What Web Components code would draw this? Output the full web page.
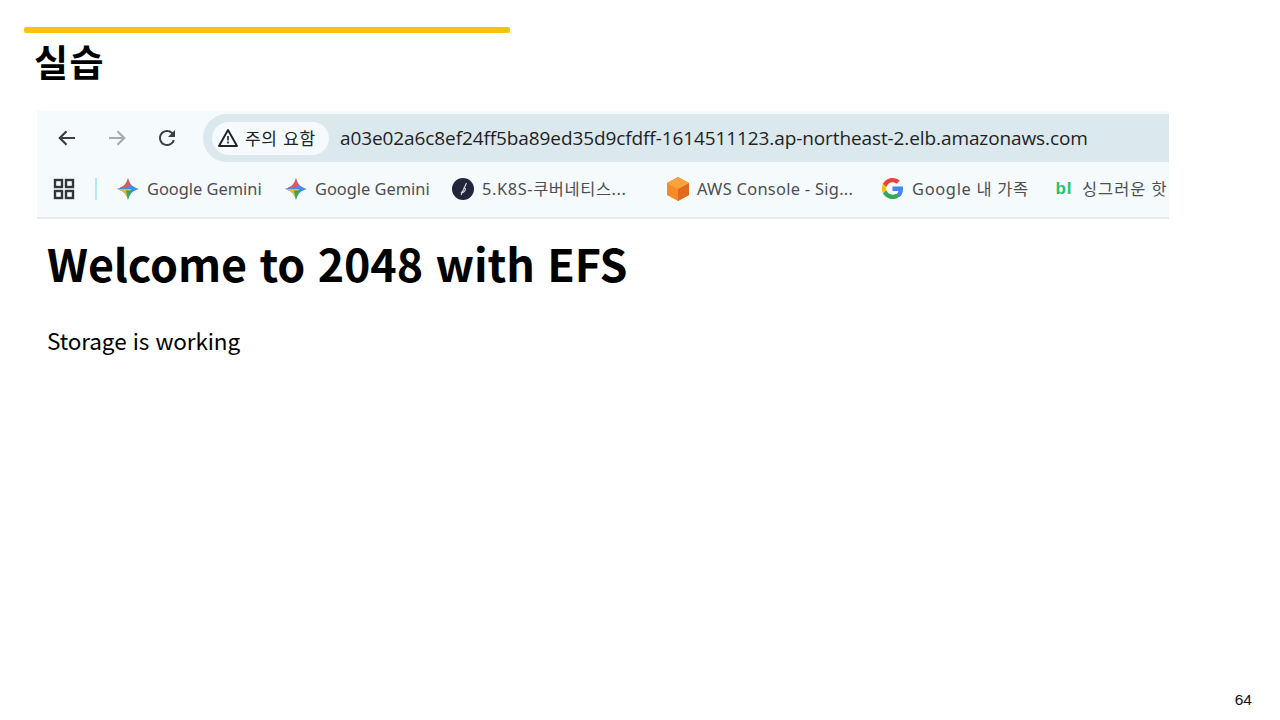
<!DOCTYPE html>
<html lang="ko">
<head>
<meta charset="utf-8">
<title>실습</title>
<style>
  html, body { margin: 0; padding: 0; background: #fff; }
  body { width: 1280px; height: 720px; overflow: hidden; font-family: "Noto Sans CJK KR", "Noto Sans", sans-serif; }
</style>
</head>
<body>
<lab-slide heading="실습" page="64">
  <browser-shot url="a03e02a6c8ef24ff5ba89ed35d9cfdff-1614511123.ap-northeast-2.elb.amazonaws.com">
    <bookmark-item label="Google Gemini" icon="gemini" width="168"></bookmark-item>
    <bookmark-item label="Google Gemini" icon="gemini" width="167"></bookmark-item>
    <bookmark-item label="5.K8S-쿠버네티스..." icon="notion" width="215" track="0.6"></bookmark-item>
    <bookmark-item label="AWS Console - Sig..." icon="aws" width="214" track="0.3"></bookmark-item>
    <bookmark-item label="Google 내 가족" icon="google" width="173" track="0.7"></bookmark-item>
    <bookmark-item label="싱그러운 핫" icon="bl" width="130" track="1"></bookmark-item>
    <web-page slot="page" title-text="Welcome to 2048 with EFS" body-text="Storage is working"></web-page>
  </browser-shot>
</lab-slide>

<script>
// slide frame: yellow rule, heading, content, page number
class LabSlide extends HTMLElement {
  constructor() {
    super();
    this.attachShadow({ mode: 'open' });
    this.shadowRoot.innerHTML = `
      <style>
        :host { display: block; position: relative; width: 1280px; height: 720px; box-sizing: border-box; padding: 27px 0 0 24px; color: #000; }
        .rule { width: 486px; height: 6px; border-radius: 2px; background: #fdc30a; }
        h1 { margin: 6px 0 0 10px; height: 44px; font: 700 37px/44px "Noto Sans CJK KR", sans-serif; letter-spacing: 1.5px; }
        .content { margin: 28px 0 0 13px; }
        .page { position: absolute; right: 28px; bottom: 12px; font: 15.5px/16px "Liberation Sans", sans-serif; color: #111; }
      </style>
      <div class="rule"></div>
      <h1></h1>
      <div class="content"><slot></slot></div>
      <div class="page"></div>
    `;
    this.shadowRoot.querySelector('h1').textContent = this.getAttribute('heading');
    this.shadowRoot.querySelector('.page').textContent = this.getAttribute('page');
  }
}

// cropped chrome window
class BrowserShot extends HTMLElement {
  constructor() {
    super();
    this.attachShadow({ mode: 'open' });
    this.shadowRoot.innerHTML = `
      <style>
        :host { display: block; width: 1132px; }
        .chrome { background: #f5fafc; border-bottom: 2px solid #e6eced; height: 106px; overflow: hidden; }
        .top { display: flex; align-items: center; height: 54px; padding-left: 18px; }
        .nav { width: 24px; height: 24px; margin-right: 26px; flex: none; }
        .nav:nth-of-type(3) { margin-right: 24px; }
        .omni { flex: 1; display: flex; align-items: center; height: 48px; padding-left: 9px; background: #dbe8ed; border-radius: 24px 0 0 24px; }
        .chip { display: flex; align-items: center; gap: 6px; width: 117px; height: 33px; box-sizing: border-box; padding-left: 5px; border-radius: 17px; background: #f5fafc; font: 17px/33px "Noto Sans CJK KR", sans-serif; letter-spacing: 0.7px; color: #222; white-space: nowrap; flex: none; }
        .chip span { position: relative; top: -1px; }
        .url { margin-left: 11px; font: 19px/24px "Open Sans", sans-serif; color: #1f1f1f; white-space: nowrap; letter-spacing: -0.1px; }
        .marks { display: flex; align-items: center; height: 47px; padding-left: 16px; }
        .apps { width: 22px; height: 22px; flex: none; }
        .sep { width: 2px; height: 22px; margin: 0 20px 0 20px; background: #b5e6f5; flex: none; }
      </style>
      <div class="chrome">
        <div class="top">
          <svg class="nav" viewBox="0 0 24 24" fill="none" stroke="#3c4043" stroke-width="2.2"><path d="M20 12H5M11.5 5.2 4.8 12l6.700 6.800"/></svg>
          <svg class="nav" viewBox="0 0 24 24" fill="none" stroke="#a6abae" stroke-width="2.2"><path d="M4 12h15M12.500 5.200l6.700 6.800-6.700 6.800"/></svg>
          <svg class="nav" viewBox="0 0 24 24" fill="#3c4043"><path d="M17.650 6.350A7.958 7.958 0 0 0 12 4c-4.420 0-7.990 3.580-7.990 8s3.570 8 7.990 8c3.730 0 6.840-2.550 7.730-6h-2.080A5.990 5.990 0 0 1 12 18c-3.310 0-6-2.690-6-6s2.690-6 6-6c1.660 0 3.140.690 4.220 1.780L13 11h7V4l-2.350 2.350z"/></svg>
          <div class="omni">
            <div class="chip">
              <svg width="22" height="22" viewBox="0 0 22 22" fill="none" stroke="#222" stroke-width="1.9"><path d="M11 3 20 19H2Z" stroke-linejoin="round"/><path d="M11 9v4.500M11 14.500v2" stroke-width="1.600"/></svg>
              <span>주의 요함</span>
            </div>
            <span class="url"></span>
          </div>
        </div>
        <div class="marks">
          <svg class="apps" viewBox="0 0 22 22" fill="none" stroke="#33373a" stroke-width="2.4"><rect x="2" y="2" width="7" height="7"/><rect x="13" y="2" width="7" height="7"/><rect x="2" y="13" width="7" height="7"/><rect x="13" y="13" width="7" height="7"/></svg>
          <div class="sep"></div>
          <slot></slot>
        </div>
      </div>
      <slot name="page"></slot>
    `;
    this.shadowRoot.querySelector('.url').textContent = this.getAttribute('url');
  }
}

const BOOKMARK_ICONS = {
  gemini: `<svg width="22" height="22" viewBox="0 0 22 22"><defs><clipPath id="s"><path d="M11 0c1.200 5.500 4.500 9.200 11 11-6.500 1.800-9.800 5.500-11 11-1.200-5.500-4.500-9.200-11-11 6.500-1.800 9.800-5.500 11-11Z"/></clipPath></defs><g clip-path="url(#s)"><rect width="22" height="22" fill="#3f8cf2"/><path d="M0 11 11 0l3 8Z" fill="#e8594a"/><path d="M0 11h14l-3 11Z" fill="#f2b632"/><path d="M9 12.500h5.500L11 22Z" fill="#35a85a"/></g></svg>`,
  notion: `<svg width="22" height="22" viewBox="0 0 22 22"><circle cx="11" cy="11" r="11" fill="#23263a"/><path d="M14.500 5 9 17M11.500 10c1.500-.5 2.500.5 1.500 2.500s-3 2.500-4 1.500" fill="none" stroke="#d9dbe2" stroke-width="1.100"/></svg>`,
  aws: `<svg width="22" height="24" viewBox="0 0 22 24"><path d="M11 0 22 6v12l-11 6L0 18V6Z" fill="#f58a26"/><path d="M11 12 22 6v12l-11 6Z" fill="#e36a1c"/><path d="M11 0 22 6l-11 6L0 6Z" fill="#f9a23e"/></svg>`,
  google: `<svg width="23" height="23" viewBox="0 0 48 48"><path fill="#4285f4" d="M46 24.500c0-1.600-.1-3.100-.4-4.500H24v9h12.400c-.5 2.900-2.200 5.300-4.600 6.900l7.200 5.600C43.300 38.500 46 32.100 46 24.500Z"/><path fill="#34a853" d="M24 46c6 0 11-2 14.900-5.400l-7.200-5.600c-2 1.400-4.600 2.200-7.700 2.200-5.900 0-10.800-4-12.600-9.300L4 33.500C7.600 41 15.200 46 24 46Z"/><path fill="#fbbc05" d="M11.400 27.900A13.400 13.400 0 0 1 11.400 20L4 14.500a22 22 0 0 0 0 19Z"/><path fill="#ea4335" d="M24 10.800c3.300 0 6.300 1.100 8.600 3.400l6.400-6.400C35 4.200 30 2 24 2 15.200 2 7.600 7 4 14.500l7.400 5.600C13.200 14.800 18.100 10.800 24 10.800Z"/></svg>`,
  bl: `<span style="display:block;width:20px;font:700 17px/22px 'Liberation Sans',sans-serif;color:#1fc46f;letter-spacing:1px;text-align:center">bl</span>`,
};

class BookmarkItem extends HTMLElement {
  constructor() {
    super();
    this.attachShadow({ mode: 'open' });
    this.shadowRoot.innerHTML = `
      <style>
        :host { display: flex; align-items: center; gap: 8px; flex: none; overflow: hidden; height: 30px; white-space: nowrap; }
        .icon { display: flex; flex: none; }
        .label { font: 16.400px/30px "Noto Sans", "Noto Sans CJK KR", sans-serif; color: #4b4f52; }
      </style>
      <span class="icon">${BOOKMARK_ICONS[this.getAttribute('icon')] || ''}</span>
      <span class="label"></span>
    `;
    this.style.width = this.getAttribute('width') + 'px';
    const label = this.shadowRoot.querySelector('.label');
    label.textContent = this.getAttribute('label');
    label.style.letterSpacing = (this.getAttribute('track') || 0) + 'px';
  }
}

// the plain page shown inside the browser
class WebPage extends HTMLElement {
  constructor() {
    super();
    this.attachShadow({ mode: 'open' });
    this.shadowRoot.innerHTML = `
      <style>
        :host { display: block; padding: 10px 10px 0; color: #000; font-family: "Noto Sans CJK KR", sans-serif; }
        h2 { margin: 0; font-size: 44.800px; line-height: 68px; font-weight: 700; letter-spacing: -0.1px; }
        p { margin: 25px 0 0; font-size: 22.500px; line-height: 36px; font-weight: 400; letter-spacing: -0.1px; }
      </style>
      <h2></h2>
      <p></p>
    `;
    this.shadowRoot.querySelector('h2').textContent = this.getAttribute('title-text');
    this.shadowRoot.querySelector('p').textContent = this.getAttribute('body-text');
  }
}

customElements.define('lab-slide', LabSlide);
customElements.define('browser-shot', BrowserShot);
customElements.define('bookmark-item', BookmarkItem);
customElements.define('web-page', WebPage);
</script>
</body>
</html>
